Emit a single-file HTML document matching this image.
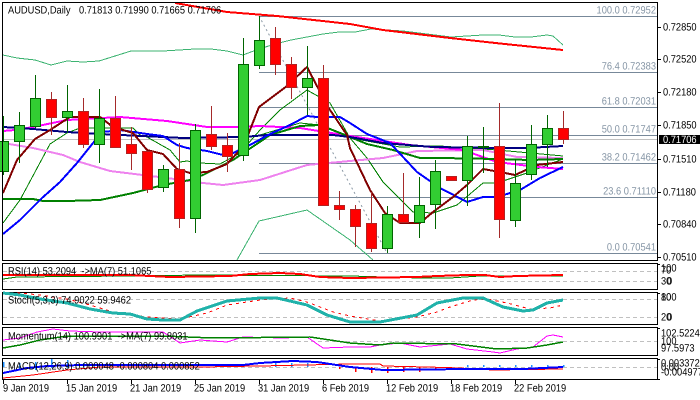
<!DOCTYPE html>
<html><head><meta charset="utf-8"><style>
html,body{margin:0;padding:0;background:#fff;width:700px;height:400px;overflow:hidden}
svg{display:block}
text{font-family:"Liberation Sans",sans-serif;font-size:9.3px;fill:#000;text-rendering:geometricPrecision;transform-box:fill-box;transform-origin:0 100%;transform:scaleY(1.14)}
.fib{fill:#8595a5;text-anchor:end}
.l{fill:none;shape-rendering:crispEdges}
.c rect{shape-rendering:crispEdges}
</style></head><body>
<svg width="700" height="400" viewBox="0 0 700 400" xmlns="http://www.w3.org/2000/svg">
<rect width="700" height="400" fill="#fff"/>
<!-- fib lines -->
<g stroke="#778899" stroke-width="1" shape-rendering="crispEdges">
<path d="M259 16.5H657M259 72.5H657M259 107.5H657M259 135.5H657M259 163.5H657M259 197.5H657M259 253.5H657"/>
</g>
<path d="M259 16L387 253" stroke="#8a98a5" stroke-width="1" stroke-dasharray="2 3" fill="none"/>
<path d="M3 139.5H657" stroke="#c0c0c0" stroke-width="1" shape-rendering="crispEdges"/>
<g>
<text class="fib" x="656" y="14">100.0 0.72952</text>
<text class="fib" x="656" y="70">76.4 0.72383</text>
<text class="fib" x="656" y="105">61.8 0.72031</text>
<text class="fib" x="656" y="133">50.0 0.71747</text>
<text class="fib" x="656" y="161">38.2 0.71462</text>
<text class="fib" x="656" y="195">23.6 0.71110</text>
<text class="fib" x="656" y="251">0.0 0.70541</text>
</g>
<!-- bands -->
<polyline class="l" stroke="#3cb371" stroke-width="1" points="3,55 17,58 35,60 51,65 67,61 83,62 99,61 115,56 131,51 147,51 163,51 179,50 195,49 211,49 227,51 243,55 259,49 275,44 291,40 307,37 323,34 339,32 355,32 371,29 387,30 403,31 419,33 435,35 451,37 467,36 483,35 499,35 515,37 531,37 547,35 553,36 563,45"/>
<polyline class="l" stroke="#3cb371" stroke-width="1" points="237,260 259,221 307,210 350,240 373,260"/>
<!-- red MA -->
<polyline class="l" stroke="#ff0000" stroke-width="2" points="175,3 227,12 277,16 350,24 383,30 450,38 500,43.5 563,50"/>
<!-- thin green -->
<polyline class="l" stroke="#008000" stroke-width="1" points="3,223 20,200 50,144 67,133 80,128 133,128 140,135 147,137 170,150 180,162 187,161 200,163 220,164 240,153 260,130 280,110 307,90 330,103 350,138 367,158 383,182 413,212 433,213 457,205 483,183 497,183 527,173 547,165 563,159"/>
<polyline class="l" stroke="#008000" stroke-width="1" points="260,135 300,123 320,125 350,138 400,147 440,146 497,150 563,156"/>
<!-- violet -->
<polyline class="l" stroke="#ee82ee" stroke-width="2" points="3,143 33,148 63,155 80,162 110,171 167,178 203,183 223,185 260,180 307,165 350,161 383,158 417,151 483,150 517,157 563,158"/>
<!-- magenta -->
<polyline class="l" stroke="#ff00ff" stroke-width="2" points="3,131 15,130 33,127 67,120 120,117 167,121 207,127 240,127 260,126 300,128 350,136 410,145 463,150 497,162 537,167 563,169"/>
<!-- green MA -->
<polyline class="l" stroke="#008000" stroke-width="2" points="3,199 33,199 43,201 67,201 100,200 133,193 163,185 190,180 203,175 233,160 270,135 300,126 320,125 350,137 367,144 393,150 420,158 440,158 497,159 530,160 563,159"/>
<!-- navy -->
<polyline class="l" stroke="#000080" stroke-width="2" points="3,127 33,129 67,132 100,134 163,137 183,138 243,137 267,135 333,135 350,137 383,143 433,147 493,148 527,148 563,146"/>
<!-- blue -->
<polyline class="l" stroke="#0000ff" stroke-width="2" points="3,234 20,220 42,198 60,182 77,163 93,143 103,132 120,130 147,134 163,136 177,145 187,148 207,151 227,156 250,145 270,134 290,125 307,116 317,117 340,117 350,123 367,134 390,143 417,172 440,188 467,202 483,197 497,197 520,190 540,178 563,167"/>
<!-- dark red -->
<polyline class="l" stroke="#800000" stroke-width="2" points="3,193 17,160 35,139 50,130 70,117 100,117 113,127 133,133 147,150 163,154 177,169 190,173 207,172 227,164 240,150 248,135 259,107 287,86 307,67 328,107 347,135 350,148 370,190 385,213 400,223 420,223 433,212 453,197 467,185 483,169 500,172 515,175 537,165 563,162"/>
<!-- candles -->
<g class="c">
<g stroke="#006400" stroke-width="1" shape-rendering="crispEdges"><path d="M3.5 116V175M19.5 112V163M35.5 75V128M67.5 85V133M99.5 89V163M163.5 165V192M195.5 124V233M243.5 38V161M259.5 16V69M307.5 46V115M387.5 206V253M419.5 177V238M435.5 160V229M467.5 136V206M483.5 127V173M515.5 159V227M531.5 125V180M547.5 115V167"/></g>
<g stroke="#a52a2a" stroke-width="1" shape-rendering="crispEdges"><path d="M51.5 92V135M83.5 98V148M115.5 96V148M131.5 127V170M147.5 151V193M179.5 143V228M211.5 106V150M227.5 133V172M275.5 27V75M291.5 57V99M323.5 65V206M339.5 191V220M355.5 205V247M371.5 192V252M403.5 173V223M499.5 103V238M563.5 111V144"/></g>
<g fill="#32cd32" stroke="#006400" stroke-width="1">
<rect x="-1.5" y="141.5" width="10" height="30"/>
<rect x="14.5" y="125.5" width="10" height="16"/>
<rect x="30.5" y="98.5" width="10" height="28"/>
<rect x="62.5" y="111.5" width="10" height="6"/>
<rect x="94.5" y="118.5" width="10" height="26"/>
<rect x="158.5" y="169.5" width="10" height="18"/>
<rect x="190.5" y="130.5" width="10" height="88"/>
<rect x="238.5" y="64.5" width="10" height="91"/>
<rect x="254.5" y="40.5" width="10" height="25"/>
<rect x="302.5" y="78.5" width="10" height="9"/>
<rect x="382.5" y="214.5" width="10" height="34"/>
<rect x="414.5" y="205.5" width="10" height="17"/>
<rect x="430.5" y="171.5" width="10" height="33"/>
<rect x="462.5" y="146.5" width="10" height="34"/>
<rect x="478.5" y="146.5" width="10" height="1"/>
<rect x="510.5" y="183.5" width="10" height="37"/>
<rect x="526.5" y="144.5" width="10" height="30"/>
<rect x="542.5" y="128.5" width="10" height="16"/>
</g>
<g fill="#ff0000" stroke="#b22222" stroke-width="1">
<rect x="46.5" y="99.5" width="10" height="18"/>
<rect x="78.5" y="111.5" width="10" height="33"/>
<rect x="110.5" y="118.5" width="10" height="29"/>
<rect x="126.5" y="144.5" width="10" height="9"/>
<rect x="142.5" y="151.5" width="10" height="38"/>
<rect x="174.5" y="169.5" width="10" height="49"/>
<rect x="206.5" y="134.5" width="10" height="12"/>
<rect x="222.5" y="145.5" width="10" height="11"/>
<rect x="270.5" y="38.5" width="10" height="26"/>
<rect x="286.5" y="64.5" width="10" height="23"/>
<rect x="318.5" y="78.5" width="10" height="127"/>
<rect x="334.5" y="205.5" width="10" height="4"/>
<rect x="350.5" y="209.5" width="10" height="17"/>
<rect x="366.5" y="223.5" width="10" height="25"/>
<rect x="398.5" y="214.5" width="10" height="8"/>
<rect x="446.5" y="176.5" width="10" height="4"/>
<rect x="494.5" y="146.5" width="10" height="73"/>
<rect x="558.5" y="128.5" width="10" height="11"/>
</g>
</g>
<!-- frames -->
<g fill="none" stroke="#000" stroke-width="1.3" shape-rendering="crispEdges">
<rect x="2.5" y="2.5" width="655" height="258"/>
<rect x="2.5" y="263.5" width="655" height="26"/>
<rect x="2.5" y="292.5" width="655" height="32"/>
<rect x="2.5" y="327.5" width="655" height="28"/>
<rect x="2.5" y="358.5" width="655" height="21"/>
</g>
<!-- right ticks -->
<path d="M657 27.5H661M657 59.5H661M657 92.5H661M657 125.5H661M657 159.5H661M657 192.5H661M657 224.5H661M657 257.5H661M657 264.5H660M657 293.5H660M657 328.5H660M657 359.5H660M657 379.5H660" stroke="#000" stroke-width="1" shape-rendering="crispEdges"/>
<!-- price labels -->
<g>
<text x="663" y="31">0.72850</text>
<text x="663" y="63">0.72520</text>
<text x="663" y="96">0.72180</text>
<text x="663" y="129">0.71850</text>
<text x="663" y="163">0.71510</text>
<text x="663" y="196">0.71180</text>
<text x="663" y="228">0.70840</text>
<text x="663" y="261">0.70510</text>
</g>
<rect x="659" y="135" width="41" height="9" fill="#000"/>
<text x="663" y="143.5" style="fill:#fff">0.71706</text>
<!-- title -->
<text x="8" y="14">AUDUSD,Daily</text>
<text x="79" y="14">0.71813 0.71990 0.71665 0.71706</text>
<!-- RSI -->
<path d="M3 271.5H657M3 281.5H657" stroke="#c0c0c0" stroke-dasharray="4 3" shape-rendering="crispEdges"/>
<polyline class="l" stroke="#008000" stroke-width="1" points="3,279 17,277 130,276 200,275 350,276 420,278 450,278 480,276 563,276"/>
<polyline class="l" stroke="#ff0000" stroke-width="2" points="3,275 130,275 170,277 230,276 250,274 280,273 300,274 320,277 350,278 417,277 437,276 467,275 485,275 500,277 517,276 563,275"/>
<text x="8" y="275">RSI(14) 53.2094&#160; -&gt;MA(7) 51.1065</text>
<text x="661" y="272">100</text><text x="661" y="274">70</text><text x="661" y="285">30</text><text x="667" y="285">0</text>
<!-- Stoch -->
<path d="M3 299.5H657M3 317.5H657" stroke="#c0c0c0" stroke-dasharray="4 3" shape-rendering="crispEdges"/>
<polyline class="l" stroke="#ff0000" stroke-width="1" stroke-dasharray="3 4" points="3,293 20,293 40,295 67,299 90,305 113,312 147,317 180,319 207,313 227,305 260,300 290,298 307,302 333,312 350,316 380,321 417,317 437,312 450,307 473,300 487,299 507,303 530,309 550,308 563,305"/>
<polyline class="l" stroke="#20b2aa" stroke-width="3" points="3,293 20,295 40,299 67,303 90,309 113,313 130,314 147,319 163,320 180,320 197,311 227,301 260,298 277,298 307,305 327,315 350,322 380,322 417,315 437,303 463,298 483,298 503,307 523,311 533,310 547,303 563,300"/>
<text x="8" y="304">Stoch(5,3,3) 74.9022 59.9462</text>
<text x="661" y="301">100</text><text x="661" y="301">80</text><text x="661" y="321">20</text><text x="667" y="321">0</text>
<!-- Momentum -->
<path d="M3 341.5H657" stroke="#c0c0c0" stroke-dasharray="4 3" shape-rendering="crispEdges"/>
<polyline class="l" stroke="#ff00ff" stroke-width="1" points="3,340 20,338 37,332 53,329 70,331 100,332 163,332 180,343 200,340 227,342 243,337 283,338 307,337 323,348 350,347 370,347 380,345 400,343 420,347 450,344 467,349 493,352 500,353 517,349 533,347 547,336 553,335 563,337"/>
<polyline class="l" stroke="#008000" stroke-width="1.5" points="3,348 20,345 40,340 67,336 163,336 213,338 310,337 350,343 380,345 393,343 457,344 473,346 497,349 527,348 547,345 563,342"/>
<text x="8" y="340">Momentum(14) 100.9901&#160; -&gt;MA(7) 99.8031</text>
<text x="661" y="337">102.5224</text><text x="661" y="345">100</text><text x="661" y="352">97.5973</text>
<!-- MACD -->
<path d="M3 367.5H657" stroke="#c0c0c0" stroke-dasharray="4 3" shape-rendering="crispEdges"/>
<path d="M3.5 362V367M19.5 363V370M35.5 362V370M51.5 359V368M67.5 360V368M83.5 363V367M275.5 363V367M291.5 363V367M307.5 363V367M467.5 365V367M483.5 365V367M499.5 365V367M515.5 365V367M531.5 365V367M547.5 365V367M563.5 365V367" stroke="#1e90ff" stroke-width="1.5" shape-rendering="crispEdges"/>
<path d="M339.5 367V369M355.5 367V372M371.5 367V373M387.5 367V373M403.5 367V372M419.5 367V372M435.5 367V370" stroke="#ff0000" stroke-width="1.5" shape-rendering="crispEdges"/>
<polyline class="l" stroke="#ff0000" stroke-width="1" points="3,378 33,375 67,370 100,367 200,367 260,366 350,364 380,364 383,366 427,367 460,368 493,370 563,369"/>
<polyline class="l" stroke="#0000ff" stroke-width="2" points="3,373 27,368 47,366 83,365 243,365 260,363 293,361 317,362 350,367 383,370 467,369 523,369 563,367"/>
<text x="8" y="370">MACD(12,26,9) 0.000048 -0.000804 0.000852</text>
<text x="661" y="367">0.003372</text><text x="661" y="371">0.00</text><text x="661" y="376">-0.004977</text>
<!-- date axis -->
<path d="M3.5 379V384M67.5 379V384M131.5 379V384M195.5 379V384M259.5 379V384M323.5 379V384M387.5 379V384M451.5 379V384M515.5 379V384" stroke="#000" stroke-width="1" shape-rendering="crispEdges"/>
<g>
<text x="3" y="392">9 Jan 2019</text>
<text x="66" y="392">15 Jan 2019</text>
<text x="130" y="392">21 Jan 2019</text>
<text x="194" y="392">25 Jan 2019</text>
<text x="258" y="392">31 Jan 2019</text>
<text x="322" y="392">6 Feb 2019</text>
<text x="386" y="392">12 Feb 2019</text>
<text x="450" y="392">18 Feb 2019</text>
<text x="514" y="392">22 Feb 2019</text>
</g>
</svg>
</body></html>
